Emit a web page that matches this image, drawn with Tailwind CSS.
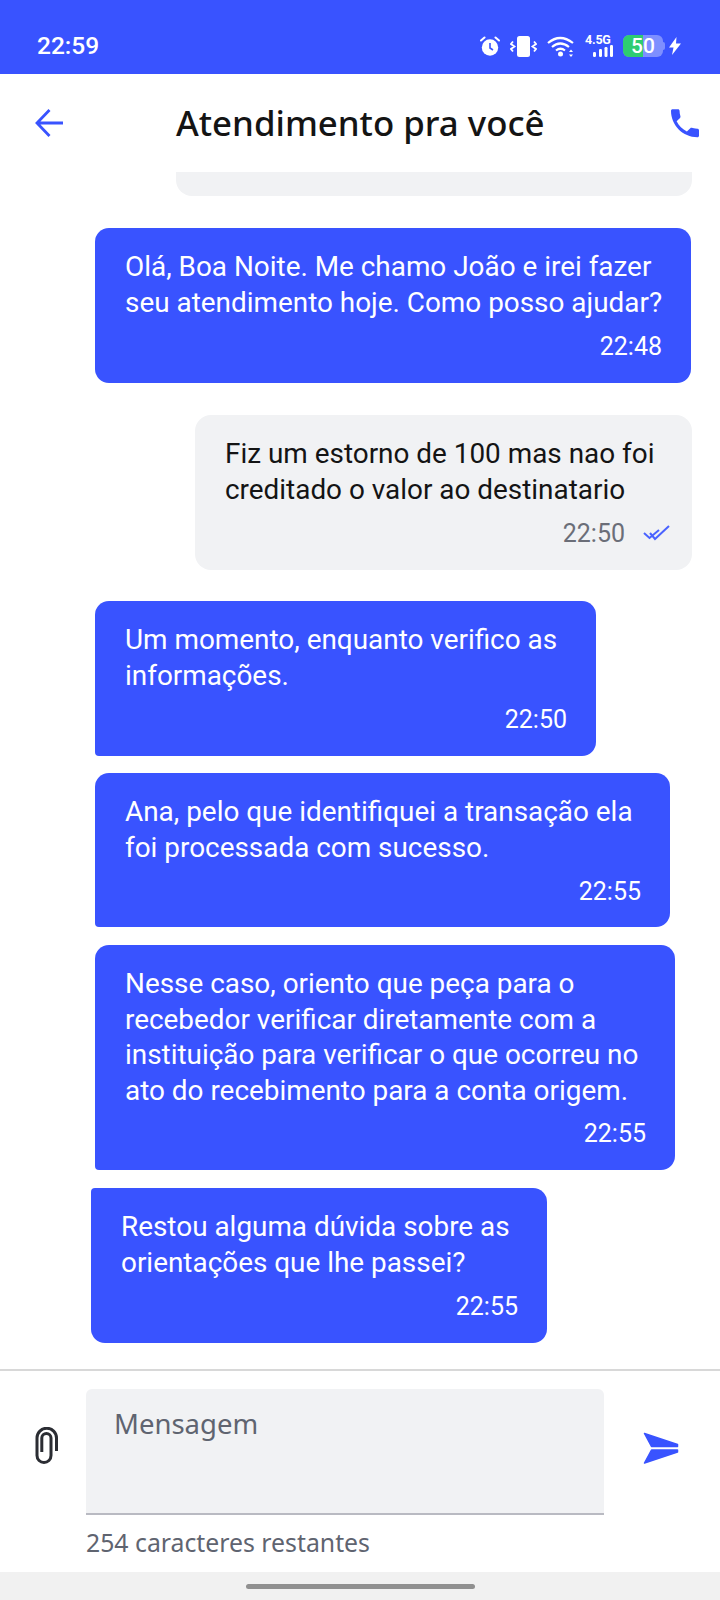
<!DOCTYPE html>
<html lang="pt"><head><meta charset="utf-8"><script src="https://cdn.jsdelivr.net/npm/@tailwindcss/browser@4"></script></head>
<body class="m-0 bg-white">
<div class="w-[720px] h-[1600px] overflow-hidden flex flex-col bg-white font-['Roboto',sans-serif] relative">
 <!-- status bar -->
 <div class="h-[74px] shrink-0 bg-[#3953ff] text-white flex items-center pl-[37px] pr-[39px] justify-between pt-[18px]">
  <span class="text-[24.500px] font-medium leading-none">22:59</span>
  <div class="flex items-center">
   <svg width="20" height="20" viewBox="0 0 20 20" class="mr-[10px]" fill="white"><circle cx="10" cy="11.500" r="8.200"/><path d="M10 7v5l3 2" stroke="#3953ff" stroke-width="1.600" fill="none"/><path d="M1 4.500 4.500 1.500M19 4.500 15.500 1.500" stroke="white" stroke-width="2" stroke-linecap="round"/></svg>
   <svg width="27" height="21" viewBox="0 0 27 21" class="mr-[10px]" fill="white"><rect x="7" y="0" width="13" height="21" rx="2.500"/><path d="M3 5.500 1 8l3.500 2.500L1 13l2 2.500M24 5.500 26 8l-3.500 2.500L26 13l-2 2.500" stroke="white" stroke-width="1.800" fill="none"/></svg>
   <svg width="27" height="21" viewBox="0 0 27 21" class="mr-[11px]" fill="none" stroke="white" stroke-width="2.200"><path d="M1 7Q13-3 26 7M5 11Q13 4 22 11M9 14.500Q13.500 11 18 14.500"/><circle cx="13.500" cy="18" r="2.500" fill="white" stroke="none"/><path d="M22 16h4l-2-2.500zM22 18.500h4L24 21z" fill="white" stroke="none"/></svg>
   <div class="w-[28px] h-[22px] mr-[10px] relative">
     <span class="absolute left-0 top-[-1px] text-[12.500px] font-bold leading-none tracking-[-0.2px]">4.5G</span>
     <svg width="28" height="22" viewBox="0 0 28 22" fill="white" class="absolute left-0 top-0"><rect x="8" y="17" width="3" height="5" rx="1.200"/><rect x="14" y="14" width="3" height="8" rx="1.200"/><rect x="19.500" y="12" width="3" height="10" rx="1.200"/><rect x="25" y="10" width="3" height="12" rx="1.200"/></svg>
   </div>
   <div class="w-[40px] h-[22px] rounded-[6px] overflow-hidden relative bg-white/35 flex">
     <div class="w-[20px] h-full bg-[#2ecc71]"></div>
     <span class="absolute inset-0 text-center text-[21px] font-medium leading-[22px]">50</span>
   </div>
   <div class="w-[2px] h-[8px] bg-white/35 rounded-r-sm"></div>
   <svg width="12" height="18" viewBox="0 0 12 18" fill="white" class="ml-[4px]"><path d="M7.500 0 0 10.500h4.500L3 18l9-11.500H7z"/></svg>
  </div>
 </div>
 <!-- app bar -->
 <div class="h-[98px] shrink-0 relative bg-white">
   <svg width="29" height="28" viewBox="0 0 29 28" class="absolute left-[35px] top-[35px]" fill="none" stroke="#3953ff" stroke-width="2.800"><path d="M28 14H3M14.500 1 2 14l12.500 13"/></svg>
   <div class="absolute left-[176px] top-[27px] text-[34.800px] leading-[44px] font-medium text-[#141414] font-['Noto_Sans',sans-serif] whitespace-nowrap">Atendimento pra você</div>
   <svg width="28" height="28.500" viewBox="0 0 18 18" class="absolute left-[671px] top-[35px]" fill="#3953ff"><path d="M3.620 7.790c1.440 2.830 3.760 5.140 6.590 6.590l2.200-2.200c.27-.27.670-.36 1.020-.24.700.23 1.600.40 3.570.57.550 0 1 .45 1 1V17c0 .55-.45 1-1 1C7.610 18 0 10.390 0 1c0-.55.45-1 1-1h3.500c.55 0 1 .45 1 1 0 1.250.2 2.450.57 3.570.11.350.03.740-.25 1.020z"/></svg>
 </div>
 <!-- messages -->
 <div class="flex-1 overflow-hidden flex flex-col text-[27.900px] leading-[35.500px]">
  <div class="ml-[176px] w-[516px] h-[24px] bg-[#f1f2f4] rounded-b-[16px]"></div>
  <div class="mt-[32px] ml-[95px] w-[596px] h-[155px] bg-[#3953ff] text-white rounded-[14px] pl-[30px] pr-[24px] pt-[21px]">
   <p>Olá, Boa Noite. Me chamo João e irei fazer seu atendimento hoje. Como posso ajudar?</p>
   <p class="text-right text-[25px] leading-[32px] mt-[11px] pr-[5px]">22:48</p>
  </div>
  <div class="mt-[32px] ml-[195px] w-[497px] h-[155px] bg-[#f1f2f4] text-[#141414] rounded-[16px] pl-[30px] pr-[22px] pt-[21px]">
   <p>Fiz um estorno de 100 mas nao foi creditado o valor ao destinatario</p>
   <div class="flex justify-end items-center mt-[11px] text-[#6b6e78] text-[25px] leading-[32px]"><span>22:50</span>
    <svg width="27" height="16" viewBox="0 0 27 16" class="ml-[18px] mb-[3px]" fill="none" stroke="#4a63ff" stroke-width="2"><path d="M1 8l5.500 5L16 5M7 8l5 6L26 1"/></svg></div>
  </div>
  <div class="mt-[31px] ml-[95px] w-[501px] h-[155px] bg-[#3953ff] text-white rounded-[14px] rounded-bl-[4px] pl-[30px] pr-[29px] pt-[21px]">
   <p>Um momento, enquanto verifico as informações.</p>
   <p class="text-right text-[25px] leading-[32px] mt-[11px]">22:50</p>
  </div>
  <div class="mt-[17px] ml-[95px] w-[575px] h-[154px] bg-[#3953ff] text-white rounded-[14px] rounded-bl-[4px] pl-[30px] pr-[29px] pt-[21px]">
   <p>Ana, pelo que identifiquei a transação ela foi processada com sucesso.</p>
   <p class="text-right text-[25px] leading-[32px] mt-[11px]">22:55</p>
  </div>
  <div class="mt-[18px] ml-[95px] w-[580px] h-[225px] bg-[#3953ff] text-white rounded-[14px] rounded-bl-[4px] pl-[30px] pr-[29px] pt-[21px]">
   <p>Nesse caso, oriento que peça para o recebedor verificar diretamente com a instituição para verificar o que ocorreu no ato do recebimento para a conta origem.</p>
   <p class="text-right text-[25px] leading-[32px] mt-[10px]">22:55</p>
  </div>
  <div class="mt-[18px] ml-[91px] w-[456px] h-[155px] bg-[#3953ff] text-white rounded-[14px] rounded-tl-[4px] pl-[30px] pr-[29px] pt-[21px]">
   <p>Restou alguma dúvida sobre as orientações que lhe passei?</p>
   <p class="text-right text-[25px] leading-[32px] mt-[11px]">22:55</p>
  </div>
 </div>
 <!-- composer -->
 <div class="h-[203px] shrink-0 bg-white border-t-2 border-[#d8d8d8] flex font-['Noto_Sans',sans-serif]">
  <div class="w-[86px] shrink-0 pl-[35px] pt-[56px]">
   <svg width="24" height="37" viewBox="0 0 24 37" fill="none" stroke="#2b2d33" stroke-width="3"><path d="M21.500 24V11a9.750 9.750 0 0 0-19.500 0v17.500a7 7 0 0 0 14 0V11a4.600 4.600 0 0 0-9.200 0v14"/></svg>
  </div>
  <div class="w-[518px] shrink-0 pt-[18px]">
   <div class="h-[126px] bg-[#f1f2f4] rounded-t-[6px] border-b-2 border-[#b9bac2] pl-[28px] pt-[15px] text-[27.500px] leading-[40px] text-[#5f6470]">Mensagem</div>
   <div class="mt-[10px] text-[24.800px] leading-[34px] text-[#5f6470]">254 caracteres restantes</div>
  </div>
  <div class="pl-[39px] pt-[61px]">
   <svg width="36" height="33" viewBox="0 0 36 33" fill="#3953ff" stroke="#3953ff" stroke-width="1.500" stroke-linejoin="round"><path d="M1.500 1.500 34.500 12.500V14.500H8.500zM8.500 18H34.500V20L1.500 31z"/></svg>
  </div>
 </div>
 <div class="h-[28px] shrink-0 bg-[#f1f1f1] flex justify-center pt-[12px]"><div class="w-[229px] h-[5px] rounded-full bg-[#909090]"></div></div>
</div>
</body></html>
